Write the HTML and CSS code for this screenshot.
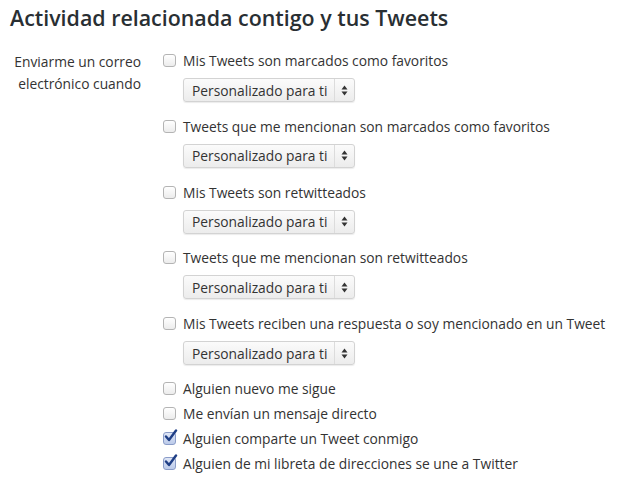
FILE: index.html
```html
<!DOCTYPE html>
<html lang="es">
<head>
<meta charset="utf-8">
<link rel="stylesheet" href="styles.css">
</head>
<body>
<div class="page">
  <h2 class="title">Actividad relacionada contigo y tus Tweets</h2>
  <div class="setting">
    <div class="label">Enviarme un correo<br>electrónico cuando</div>
    <div class="controls">
      <div class="group">
        <div class="check"><span class="box"></span>Mis Tweets son marcados como favoritos</div>
        <div class="select"><span class="value">Personalizado para ti</span><span class="arrows"><svg width="7" height="11" viewBox="0 0 7 11"><path d="M3.5 0.5L6.5 4.5H0.5Z M3.5 10.5L6.5 6.5H0.5Z" fill="#333"/></svg></span></div>
      </div>
      <div class="group">
        <div class="check"><span class="box"></span>Tweets que me mencionan son marcados como favoritos</div>
        <div class="select"><span class="value">Personalizado para ti</span><span class="arrows"><svg width="7" height="11" viewBox="0 0 7 11"><path d="M3.5 0.5L6.5 4.5H0.5Z M3.5 10.5L6.5 6.5H0.5Z" fill="#333"/></svg></span></div>
      </div>
      <div class="group">
        <div class="check"><span class="box"></span>Mis Tweets son retwitteados</div>
        <div class="select"><span class="value">Personalizado para ti</span><span class="arrows"><svg width="7" height="11" viewBox="0 0 7 11"><path d="M3.5 0.5L6.5 4.5H0.5Z M3.5 10.5L6.5 6.5H0.5Z" fill="#333"/></svg></span></div>
      </div>
      <div class="group">
        <div class="check"><span class="box"></span>Tweets que me mencionan son retwitteados</div>
        <div class="select"><span class="value">Personalizado para ti</span><span class="arrows"><svg width="7" height="11" viewBox="0 0 7 11"><path d="M3.5 0.5L6.5 4.5H0.5Z M3.5 10.5L6.5 6.5H0.5Z" fill="#333"/></svg></span></div>
      </div>
      <div class="group">
        <div class="check"><span class="box"></span>Mis Tweets reciben una respuesta o soy mencionado en un Tweet</div>
        <div class="select"><span class="value">Personalizado para ti</span><span class="arrows"><svg width="7" height="11" viewBox="0 0 7 11"><path d="M3.5 0.5L6.5 4.5H0.5Z M3.5 10.5L6.5 6.5H0.5Z" fill="#333"/></svg></span></div>
      </div>
      <div class="simple">
        <div class="check"><span class="box"></span>Alguien nuevo me sigue</div>
        <div class="check"><span class="box"></span>Me envían un mensaje directo</div>
        <div class="check"><span class="box checked"><svg class="tick" width="15" height="15" viewBox="0 0 15 15"><path d="M3 7.5L6 11L13 1.5" fill="none" stroke="#1f3f86" stroke-width="2.4" stroke-linecap="round" stroke-linejoin="round"/></svg></span>Alguien comparte un Tweet conmigo</div>
        <div class="check"><span class="box checked"><svg class="tick" width="15" height="15" viewBox="0 0 15 15"><path d="M3 7.5L6 11L13 1.5" fill="none" stroke="#1f3f86" stroke-width="2.4" stroke-linecap="round" stroke-linejoin="round"/></svg></span>Alguien de mi libreta de direcciones se une a Twitter</div>
      </div>
    </div>
  </div>
</div>
</body>
</html>
```

FILE: styles.css
```css
html, body {
  margin: 0;
  padding: 0;
  background: #ffffff;
}

.page {
  padding: 6px 10px 0 10px;
  font-family: "Open Sans", "Liberation Sans", sans-serif;
  color: #333333;
}

.title {
  margin: 0 0 18px 0;
  font-size: 21.4px;
  line-height: 24px;
  font-weight: 600;
  color: #292f33;
}

.setting {
  display: flex;
  align-items: flex-start;
}

.label {
  width: 131px;
  flex: none;
  text-align: right;
  font-size: 13.8px;
  line-height: 22px;
  padding-top: 3px;
  color: #333333;
}

.controls {
  margin-left: 22px;
  display: flex;
  flex-direction: column;
}

.group {
  display: flex;
  flex-direction: column;
  align-items: flex-start;
  margin-bottom: 11.75px;
}

.check {
  display: flex;
  align-items: center;
  height: 25px;
  font-size: 13.8px;
  white-space: nowrap;
}

.box {
  position: relative;
  flex: none;
  width: 11px;
  height: 11px;
  margin-right: 7px;
  border: 1px solid #b4b4b4;
  border-radius: 3px;
  background: linear-gradient(#ffffff, #ececec);
}

.box.checked {
  border-color: #8a9cc8;
  background: linear-gradient(#dfe6f6, #bccbea);
}

.tick {
  position: absolute;
  left: -1px;
  top: -4px;
}

.select {
  margin-left: 20px;
  margin-top: 5px;
  width: 170px;
  height: 22px;
  display: flex;
  align-items: stretch;
  border: 1px solid #d3d3d3;
  border-radius: 3px;
  background: linear-gradient(#fbfbfb, #ececec);
  box-shadow: 0 1px 1px rgba(0, 0, 0, 0.08);
  font-size: 13.8px;
}

.value {
  flex: 1;
  display: flex;
  align-items: center;
  padding-left: 8px;
  border-right: 1px solid #dcdcdc;
  color: #333333;
}

.arrows {
  width: 19px;
  flex: none;
  display: flex;
  align-items: center;
  justify-content: center;
}

.simple {
  display: flex;
  flex-direction: column;
  margin-top: -1px;
}
```
